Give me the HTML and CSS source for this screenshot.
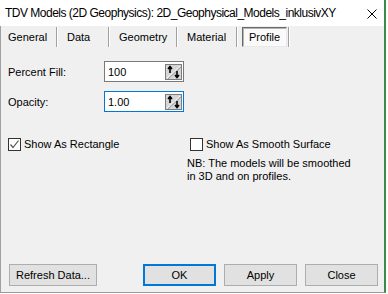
FILE: index.html
```html
<!DOCTYPE html>
<html>
<head>
  <meta charset="utf-8">
  <link rel="stylesheet" href="styles.css">
</head>
<body>
  <div class="window">
    <div class="titlebar">
      <span class="title">TDV Models (2D Geophysics): 2D_Geophysical_Models_inklusivXY</span>
      <svg class="close" width="10" height="10" viewBox="0 0 10 10">
        <path d="M0.5 0.5 L9.5 9.5 M9.5 0.5 L0.5 9.5" stroke="#000" stroke-width="1" fill="none"/>
      </svg>
    </div>

    <div class="client">
      <div class="tabs">
        <div class="tab tab-general">General</div>
        <div class="tab tab-data">Data</div>
        <div class="tab tab-geometry">Geometry</div>
        <div class="tab tab-material">Material</div>
        <div class="tab tab-profile"><span class="tab-current">Profile</span></div>
      </div>

      <div class="page">
        <div class="field-row">
          <span class="field-label">Percent Fill:</span>
          <div class="spin-box">
            <span class="spin-value">100</span>
            <svg class="spinner" width="17" height="16" viewBox="0 0 17 16">
              <rect x="0.5" y="0.5" width="16" height="15" fill="#d6d6d6" stroke="#7d7d7d"/>
              <path d="M2 14 L15 2" stroke="#f4f4f4" stroke-width="1"/>
              <path d="M3 15 L16 3" stroke="#9a9a9a" stroke-width="1"/>
              <path d="M5 3 V9 M3 5 L5 2.5 L7 5" stroke="#000" stroke-width="1.6" fill="none"/>
              <path d="M12 7 V13 M10 11 L12 13.5 L14 11" stroke="#000" stroke-width="1.6" fill="none"/>
            </svg>
          </div>
        </div>

        <div class="field-row">
          <span class="field-label">Opacity:</span>
          <div class="spin-box spin-focus">
            <span class="spin-value">1.00</span>
            <svg class="spinner" width="17" height="16" viewBox="0 0 17 16">
              <rect x="0.5" y="0.5" width="16" height="15" fill="#d6d6d6" stroke="#7d7d7d"/>
              <path d="M2 14 L15 2" stroke="#f4f4f4" stroke-width="1"/>
              <path d="M3 15 L16 3" stroke="#9a9a9a" stroke-width="1"/>
              <path d="M5 3 V9 M3 5 L5 2.5 L7 5" stroke="#000" stroke-width="1.6" fill="none"/>
              <path d="M12 7 V13 M10 11 L12 13.5 L14 11" stroke="#000" stroke-width="1.6" fill="none"/>
            </svg>
          </div>
        </div>

        <div class="options">
          <div class="option-col">
            <label class="check">
              <span class="check-box">
                <svg width="11" height="11" viewBox="0 0 11 11">
                  <path d="M1.5 5.5 L4 8.5 L9.5 1.5" stroke="#555" stroke-width="1.2" fill="none"/>
                </svg>
              </span>
              Show As Rectangle
            </label>
          </div>
          <div class="option-col option-right">
            <label class="check">
              <span class="check-box"></span>
              Show As Smooth Surface
            </label>
            <p class="note">NB: The models will be smoothed<br>in 3D and on profiles.</p>
          </div>
        </div>
      </div>

      <div class="buttons">
        <button class="btn btn-refresh">Refresh Data...</button>
        <button class="btn btn-default">OK</button>
        <button class="btn">Apply</button>
        <button class="btn">Close</button>
      </div>
    </div>
  </div>
</body>
</html>
```

FILE: styles.css
```css
body {
  margin: 0;
  width: 388px;
  height: 294px;
  background: #ffffff;
  font-family: "Liberation Sans", Arial, sans-serif;
  font-size: 11px;
  color: #000;
  overflow: hidden;
}

.window {
  width: 384px;
  height: 292px;
  border-right: 2px solid #3a8a4c;
  border-bottom: 1px solid #9a9a9a;
  display: flex;
  flex-direction: column;
  background: #f0f0f0;
}

.titlebar {
  height: 26px;
  background: #ffffff;
  display: flex;
  align-items: center;
  padding-left: 5px;
  padding-right: 7px;
}

.title {
  font-size: 12px;
  letter-spacing: -0.5px;
  flex: 1;
  white-space: nowrap;
}

.close {
  margin-top: 1px;
}

.client {
  flex: 1;
  border-left: 1px solid #a0a0a0;
  display: flex;
  flex-direction: column;
}

.tabs {
  display: flex;
  height: 20px;
  margin-top: 1px;
}

.tab {
  display: flex;
  align-items: center;
  border-right: 1px solid #a0a0a0;
  box-shadow: 1px 0 0 #ffffff;
  white-space: nowrap;
}

.tab-general {
  width: 48px;
  padding-left: 7px;
}

.tab-data {
  width: 41px;
  padding-left: 10px;
}

.tab-geometry {
  width: 57px;
  padding-left: 10px;
}

.tab-material {
  width: 49px;
  padding-left: 10px;
}

.tab-profile {
  width: 46px;
  padding-left: 5px;
}

.tab-current {
  display: flex;
  align-items: center;
  height: 18px;
  padding: 0 6px;
  background: #fafafa;
  border-top: 1px solid #6a6a6a;
  border-left: 1px solid #6a6a6a;
  border-right: 1px solid #e8e8e8;
  border-bottom: 1px solid #e8e8e8;
  box-shadow: inset 1px 1px 0 #b4b4b4;
}

.page {
  flex: 1;
  padding-top: 14px;
}

.field-row {
  display: flex;
  align-items: center;
  height: 21px;
  margin-bottom: 9px;
}

.field-label {
  width: 96px;
  padding-left: 7px;
}

.spin-box {
  width: 77px;
  height: 19px;
  border: 1px solid #7a7a7a;
  background: #ffffff;
  display: flex;
  align-items: center;
  padding-right: 1px;
}

.spin-focus {
  border-color: #0078d7;
}

.spin-value {
  flex: 1;
  padding-left: 3px;
}

.options {
  display: flex;
  padding-top: 15px;
}

.option-col {
  width: 179px;
  padding-left: 7px;
}

.option-right {
  width: auto;
  padding-left: 0;
}

.check {
  display: flex;
  align-items: center;
  height: 16px;
}

.option-right .check {
  padding-left: 3px;
}

.check-box {
  width: 11px;
  height: 11px;
  border: 1px solid #333333;
  background: #ffffff;
  margin-right: 3px;
  display: flex;
}

.note {
  margin: 5px 0 0 0;
  line-height: 13px;
}

.buttons {
  display: flex;
  padding: 0 6px 6px 8px;
}

.btn {
  font-family: "Liberation Sans", Arial, sans-serif;
  font-size: 11px;
  height: 22px;
  width: 73px;
  background: #e1e1e1;
  border: 1px solid #adadad;
  margin-left: 8px;
  padding: 0;
  color: #000;
}

.btn-refresh {
  width: 88px;
  margin-left: 0;
  margin-right: auto;
}

.btn-default {
  border: 2px solid #0078d7;
}
```
